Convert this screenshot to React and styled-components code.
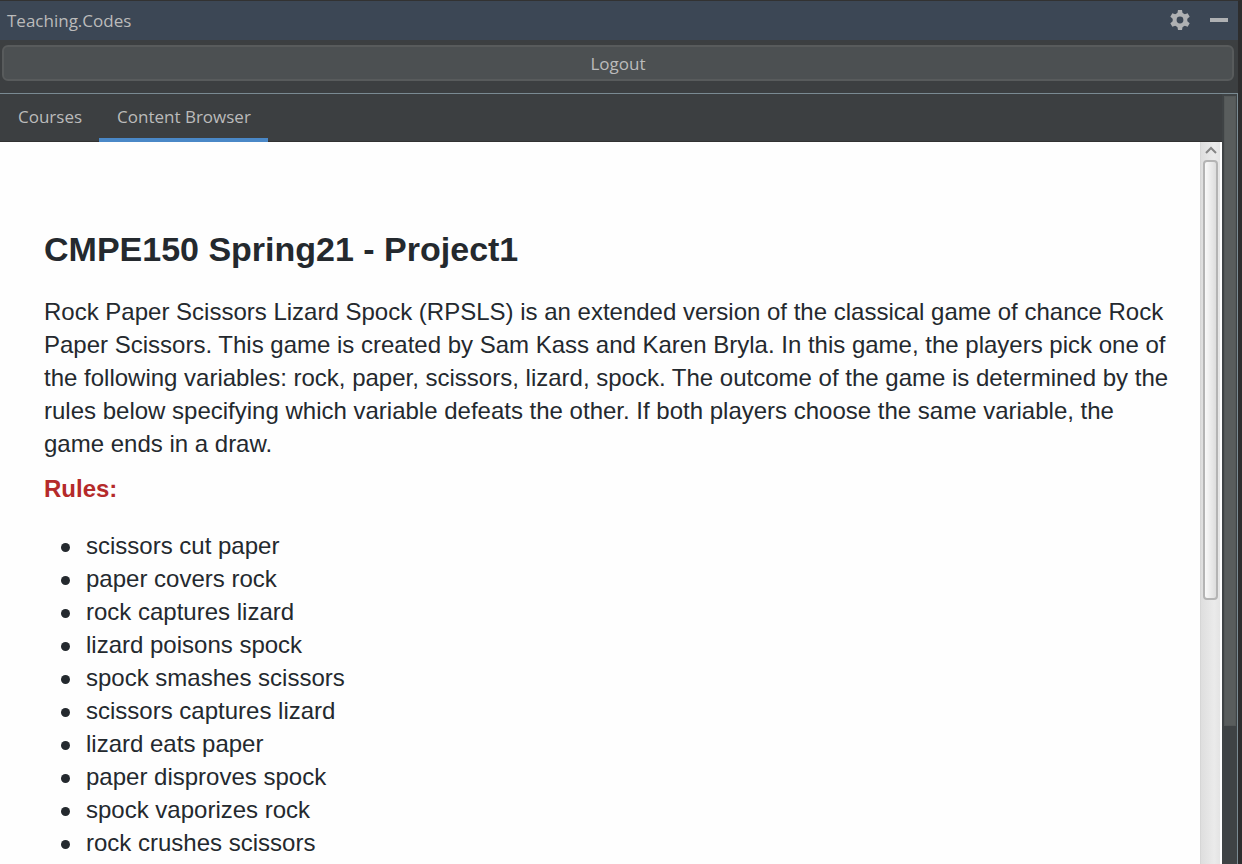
import React from "react";
import styled, { createGlobalStyle } from "styled-components";

const GlobalStyle = createGlobalStyle`
  * { box-sizing: border-box; }
  body { margin: 0; background: #2b2b2b; }
`;

const ui = `"Open Sans", "Noto Sans", sans-serif`;

const ToolWindow = styled.div`
  display: flex;
  flex-direction: column;
  height: 100vh;
  overflow: hidden;
  border-top: 1px solid #323232;
  border-right: 4px solid #2d2d2e;
  background: #3c3f41;
  color: #bbbbbb;
  font-family: ${ui};
  font-size: 17px;
  font-weight: 400;
`;

const TitleBar = styled.header`
  display: flex;
  align-items: center;
  justify-content: space-between;
  flex: none;
  height: 39px;
  padding: 0 9px 1px 7px;
  background: #3c4755;
`;

const Title = styled.h1`
  margin: 0;
  font-size: 17px;
  font-weight: 400;
`;

const Actions = styled.div`
  display: flex;
  gap: 19px;
`;

const IconButton = styled.button`
  display: flex;
  padding: 0;
  border: 0;
  background: none;
  color: #afb1b3;
`;

const LogoutButton = styled.button`
  flex: none;
  height: 36px;
  margin: 5px 4px 12px 2px;
  padding: 0;
  border: 2px solid #585b5c;
  border-radius: 6px;
  background: #4c5052;
  color: #bbbbbb;
  font: inherit;
`;

const Panel = styled.div`
  display: flex;
  flex: 1;
  min-height: 0;
  border-top: 1px solid #7a8a92;
  border-right: 1px solid #7a8a92;
`;

const Main = styled.main`
  display: flex;
  flex: 1;
  flex-direction: column;
  min-width: 0;
`;

const Tabs = styled.nav`
  display: flex;
  flex: none;
  height: 48px;
  border-bottom: 1px solid #323232;
`;

const Tab = styled.button`
  height: 48px;
  padding: 0 17px 0 18px;
  border: 0;
  border-bottom: 4px solid ${(p) => (p.$active ? "#4a88c7" : "transparent")};
  background: none;
  color: #bbbbbb;
  font: inherit;
`;

const Browser = styled.div`
  display: flex;
  flex: 1;
  min-height: 0;
  background: #ffffff;
`;

const Article = styled.article`
  flex: 1;
  min-width: 0;
  overflow: hidden;
  padding: 85px 28px 0 44px;
  background: #fefefe;
  color: #24292e;
  font-family: "Liberation Sans", Arial, sans-serif;
  font-size: 24px;
  font-weight: 400;
  line-height: 33px;
`;

const Heading = styled.h2`
  margin: 0 0 24px;
  font-size: 34px;
  line-height: 44px;
`;

const Paragraph = styled.p`
  margin: 0 0 12px;
`;

const RulesTitle = styled.h3`
  margin: 0 0 24px;
  color: #b52a2a;
  font-size: 24px;
`;

const Rules = styled.ul`
  margin: 0;
  padding: 0 0 0 17px;
  list-style: none;
`;

const Rule = styled.li`
  display: flex;
  align-items: center;
  gap: 16px;

  &::before {
    content: "";
    width: 9px;
    height: 9px;
    margin-top: 4px;
    border-radius: 50%;
    background: #24292e;
  }
`;

const InnerScroll = styled.div`
  display: flex;
  flex: none;
  flex-direction: column;
  align-items: center;
  width: 20px;
  margin-right: 2px;
  border-left: 1px solid #d6d6d6;
  background: linear-gradient(to right, #dedede, #ebebeb 70%, #e4e4e4);
`;

const ScrollUp = styled.button`
  display: flex;
  align-items: center;
  justify-content: center;
  width: 100%;
  height: 18px;
  padding: 0 0 2px;
  border: 0;
  background: none;
  color: #858585;
`;

const InnerThumb = styled.div`
  width: 15px;
  height: 61%;
  border: 2px solid #b4b4b4;
  border-radius: 4px;
  background: linear-gradient(to right, #fafafa, #dddddd);
`;

const OuterScroll = styled.div`
  flex: none;
  width: 15px;
  padding: 2px 1px 0 2px;
  background: #3f4345;
`;

const OuterThumb = styled.div`
  height: 82%;
  border: 1px solid #545858;
  background: #595d5d;
`;

const rules = [
  "scissors cut paper",
  "paper covers rock",
  "rock captures lizard",
  "lizard poisons spock",
  "spock smashes scissors",
  "scissors captures lizard",
  "lizard eats paper",
  "paper disproves spock",
  "spock vaporizes rock",
  "rock crushes scissors",
];

const GearIcon = () => (
  <svg width="20" height="20" viewBox="0 0 20 20" fill="currentColor">
    <circle cx="10" cy="10" r="5.400" fill="none" stroke="currentColor" strokeWidth="4" />
    {[0, 60, 120, 180, 240, 300].map((angle) => (
      <path key={angle} d="M8 0h4l.8 4.500H7.200z" transform={`rotate(${angle} 10 10)`} />
    ))}
  </svg>
);

const MinimizeIcon = () => (
  <svg width="20" height="20" viewBox="0 0 20 20" fill="currentColor">
    <rect x="1" y="8" width="18" height="4" />
  </svg>
);

const UpIcon = () => (
  <svg width="12" height="8" viewBox="0 0 12 8" fill="none" stroke="currentColor" strokeWidth="2">
    <path d="M1 7l5-5 5 5" />
  </svg>
);

export default function App() {
  return (
    <>
      <GlobalStyle />
      <ToolWindow>
        <TitleBar>
          <Title>Teaching.Codes</Title>
          <Actions>
            <IconButton aria-label="Settings"><GearIcon /></IconButton>
            <IconButton aria-label="Hide"><MinimizeIcon /></IconButton>
          </Actions>
        </TitleBar>
        <LogoutButton>Logout</LogoutButton>
        <Panel>
          <Main>
            <Tabs>
              <Tab>Courses</Tab>
              <Tab $active>Content Browser</Tab>
            </Tabs>
            <Browser>
              <Article>
                <Heading>CMPE150 Spring21 - Project1</Heading>
                <Paragraph>
                  Rock Paper Scissors Lizard Spock (RPSLS) is an extended version of the
                  classical game of chance Rock Paper Scissors. This game is created by Sam
                  Kass and Karen Bryla. In this game, the players pick one of the following
                  variables: rock, paper, scissors, lizard, spock. The outcome of the game is
                  determined by the rules below specifying which variable defeats the other.
                  If both players choose the same variable, the game ends in a draw.
                </Paragraph>
                <RulesTitle>Rules:</RulesTitle>
                <Rules>
                  {rules.map((rule) => (
                    <Rule key={rule}>{rule}</Rule>
                  ))}
                </Rules>
              </Article>
              <InnerScroll>
                <ScrollUp aria-label="Scroll up"><UpIcon /></ScrollUp>
                <InnerThumb />
              </InnerScroll>
            </Browser>
          </Main>
          <OuterScroll>
            <OuterThumb />
          </OuterScroll>
        </Panel>
      </ToolWindow>
    </>
  );
}
